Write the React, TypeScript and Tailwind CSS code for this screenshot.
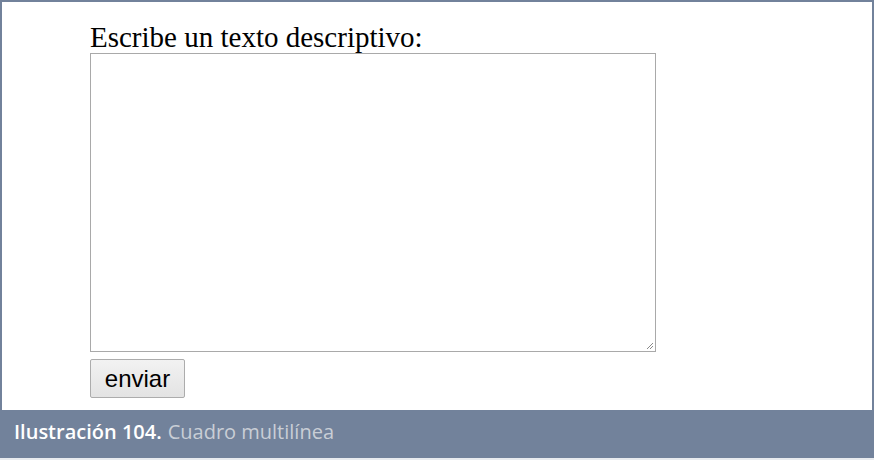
export default function App() {
  return (
    <div className="flex h-[460px] w-[874px] flex-col bg-[#e8ebef]">
      <div className="flex h-[458px] w-[874px] flex-col border-x-2 border-t-2 border-[#72829b] bg-white">
        <div className="flex flex-1 flex-col pl-[88px] pt-[19px]">
          <label className="font-['Liberation_Serif',serif] text-[29px] leading-[32px] text-black">
            Escribe un texto descriptivo:
          </label>
          <div className="relative h-[299px] w-[566px] border border-[#a9a9a9] bg-white">
            <svg className="absolute bottom-[1px] right-[1px]" width="9" height="9" viewBox="0 0 9 9">
              <path d="M8 2 L2 8 M8 5 L5 8" stroke="#8a8a8a" strokeWidth="1" />
            </svg>
          </div>
          <button className="mt-[7px] h-[39px] w-[95px] rounded-[2px] border border-[#acacac] bg-gradient-to-b from-[#f2f2f2] to-[#e3e3e3] font-['Liberation_Sans',sans-serif] text-[24px] leading-none text-black">
            enviar
          </button>
        </div>
        <div className="flex h-[48px] items-center bg-[#72829b] pb-[4px] pl-[12px] font-['Open_Sans',sans-serif] text-[20px]">
          <span className="font-semibold text-white">Ilustración 104.</span>
          <span className="ml-[6px] text-[#c9ced6]">Cuadro multilínea</span>
        </div>
      </div>
    </div>
  );
}
